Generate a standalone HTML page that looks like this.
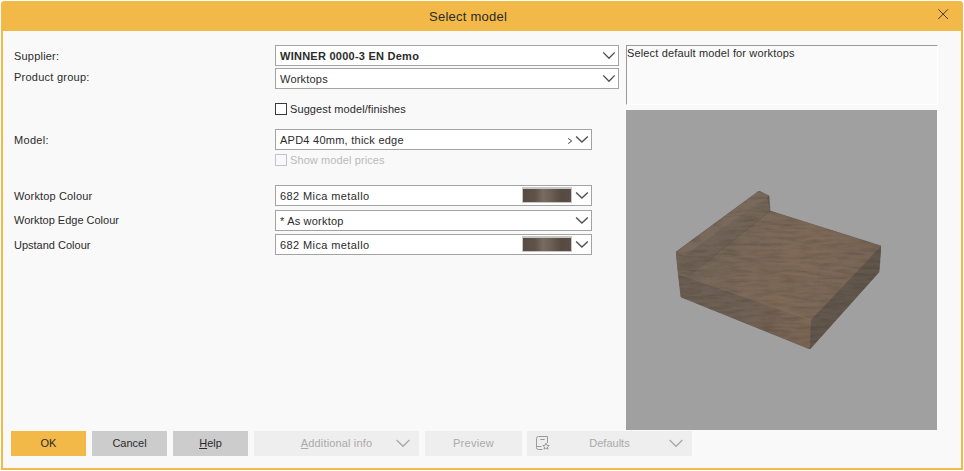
<!DOCTYPE html>
<html><head><meta charset="utf-8">
<style>
*{box-sizing:border-box;margin:0;padding:0}
html,body{width:964px;height:471px;background:#ffffff;overflow:hidden;font-family:"Liberation Sans",sans-serif;font-size:11px;color:#2b2b2b}
.a{position:absolute;white-space:nowrap}
#frame{position:absolute;left:1px;top:1px;width:962px;height:469px;border:2px solid #f2b948;border-top:none;background:#f9f9f9;border-radius:4px 4px 0 0}
#title{position:absolute;left:1px;top:1px;width:962px;height:30px;background:#f2b948;border-radius:4px 4px 0 0}
.box{position:absolute;background:#fff;border:1px solid #a3a3a3;height:21px}
.lbl{position:absolute;white-space:nowrap;line-height:13px}
.cb{position:absolute;width:12px;height:12px;border:1px solid #3a3a3a;background:#fff}
.btn{position:absolute;top:431px;height:25px;line-height:25px;text-align:center}
.sw{position:absolute;left:522px;width:50px;height:16px;border:1px solid #c6c6c6;border-top-width:2px;background:linear-gradient(90deg,#574b43 0%,#5e5249 25%,#7a6b5f 42%,#6a5d52 60%,#564a42 80%,#5a4e46 100%)}
svg{position:absolute;left:0;top:0}
</style></head><body>
<div id="frame"></div>
<div id="title"></div>
<div class="a" style="left:429px;top:9px;font-size:13px;line-height:15px;color:#2b2b2b;letter-spacing:0.25px">Select model</div>

<!-- labels -->
<div class="lbl" style="left:14px;top:50px;letter-spacing:0.2px">Supplier:</div>
<div class="lbl" style="left:14px;top:71px;letter-spacing:0.25px">Product group:</div>
<div class="lbl" style="left:14px;top:134px;letter-spacing:0.3px">Model:</div>
<div class="lbl" style="left:14px;top:190px;letter-spacing:0.15px">Worktop Colour</div>
<div class="lbl" style="left:14px;top:214px">Worktop Edge Colour</div>
<div class="lbl" style="left:14px;top:239px">Upstand Colour</div>

<!-- boxes -->
<div class="box" style="left:275px;top:45px;width:344px"></div>
<div class="lbl" style="left:280px;top:50px;font-weight:bold;letter-spacing:0.25px">WINNER 0000-3 EN Demo</div>
<div class="box" style="left:275px;top:68px;width:344px"></div>
<div class="lbl" style="left:280px;top:73px;letter-spacing:0.2px">Worktops</div>

<div class="cb" style="left:275px;top:103px"></div>
<div class="lbl" style="left:290px;top:103px;letter-spacing:0.1px">Suggest model/finishes</div>

<div class="box" style="left:275px;top:129px;width:317px"></div>
<div class="lbl" style="left:280px;top:134px;letter-spacing:0.25px">APD4 40mm, thick edge</div>
<div class="cb" style="left:275px;top:154px;border-color:#c6bfcc;background:#f9f9f9"></div>
<div class="lbl" style="left:290px;top:154px;color:#b9b9b9;letter-spacing:0.1px">Show model prices</div>

<div class="box" style="left:275px;top:185px;width:317px"></div>
<div class="lbl" style="left:280px;top:190px;letter-spacing:0.4px">682 Mica metallo</div>
<div class="sw" style="top:187px"></div>
<div class="box" style="left:275px;top:210px;width:317px"></div>
<div class="lbl" style="left:280px;top:215px;letter-spacing:0.2px">* As worktop</div>
<div class="box" style="left:275px;top:234px;width:317px"></div>
<div class="lbl" style="left:280px;top:239px;letter-spacing:0.4px">682 Mica metallo</div>
<div class="sw" style="top:236px"></div>

<!-- description -->
<div class="a" style="left:626px;top:45px;width:312px;height:60px;border:1px solid #ffffff;border-left-color:#9a9a9a;border-top-color:#9a9a9a;background:#fafafa"></div>
<div class="lbl" style="left:627px;top:47px;letter-spacing:0.15px">Select default model for worktops</div>

<!-- preview -->
<div class="a" style="left:626px;top:110px;width:311px;height:320px;background:#a0a0a0"></div>

<svg width="964" height="471" viewBox="0 0 964 471">
<defs>
<filter id="tx" x="0" y="0" width="100%" height="100%"><feTurbulence type="fractalNoise" baseFrequency="0.05 0.3" numOctaves="4" seed="11" result="n"/><feColorMatrix in="n" type="matrix" values="0 0 0 0 0  0 0 0 0 0  0 0 0 0 0  -0.5 0 0 0 0.33" result="m"/><feComposite in="m" in2="SourceGraphic" operator="in" result="c"/><feBlend in="SourceGraphic" in2="c" mode="multiply"/></filter>
<linearGradient id="gtop" x1="700" y1="220" x2="860" y2="300" gradientUnits="userSpaceOnUse"><stop offset="0" stop-color="#736659"/><stop offset="0.6" stop-color="#806a58"/><stop offset="1" stop-color="#776657"/></linearGradient>
<linearGradient id="gfront" x1="678" y1="280" x2="811" y2="330" gradientUnits="userSpaceOnUse"><stop offset="0" stop-color="#6a5e53"/><stop offset="0.5" stop-color="#706155"/><stop offset="1" stop-color="#7c6754"/></linearGradient>
<linearGradient id="gup" x1="690" y1="260" x2="770" y2="200" gradientUnits="userSpaceOnUse"><stop offset="0" stop-color="#6f6256"/><stop offset="1" stop-color="#766759"/></linearGradient>
</defs>
<g filter="url(#tx)" stroke-width="0.6" stroke-linejoin="round">
<polygon points="676,252 759,191 769,196 770,211 881,246 879,272 810,349 681,297" fill="#665a50" stroke="#665a50"/>
<polygon points="690,275 770,211 881,246 811,320 678,273" fill="url(#gtop)"/>
<polygon points="678,273 811,320 810,349 681,297" fill="url(#gfront)"/>
<polygon points="811,320 881,246 879,272 810,349" fill="#62574d"/>
<polygon points="684,256 767,197 770,211 690,275" fill="url(#gup)"/>
<polygon points="676,252 759,191 769,196 684,256" fill="#7a6a5c"/>
<polygon points="676,252 684,256 690,275 678,273" fill="#716356"/>
</g>
<g fill="none" stroke-width="0.8">
<path d="M678 273.5L811 320" stroke="#8a7563" opacity="0.7"/>
<path d="M690 275L770 211" stroke="#5f5247" opacity="0.5"/>
<path d="M811 320L881 246" stroke="#7a6756" opacity="0.5"/>
</g>
</svg>

<!-- buttons -->
<div class="btn" style="left:11px;width:75px;background:#f2b948">OK</div>
<div class="btn" style="left:92px;width:75px;background:#cccccc">Cancel</div>
<div class="btn" style="left:173px;width:75px;background:#cccccc"><u>H</u>elp</div>
<div class="btn" style="left:254px;width:165px;background:#eeeeee;color:#aaaaaa"><span style="letter-spacing:0.15px"><u>A</u>dditional info</span></div>
<div class="btn" style="left:425px;width:97px;background:#eeeeee;color:#aaaaaa;letter-spacing:0.3px">Preview</div>
<div class="btn" style="left:527px;width:165px;background:#eeeeee;color:#aaaaaa">Defaults</div>

<svg width="964" height="471" viewBox="0 0 964 471">
<g fill="none" stroke-linecap="butt">
<path d="M938.3 9.3L948 19M948 9.3L938.3 19" stroke="#2e2a22" stroke-width="0.9"/>
<g stroke="#4f4f4f" stroke-width="1.35">
<path d="M603.2 52.4L609 58.3L614.7 52.4"/>
<path d="M603.2 75.4L609 81.3L614.7 75.4"/>
<path d="M576.1 136.4L581.9 142.1L587.8 136.4"/>
<path d="M576.1 192.4L581.9 198.1L587.8 192.4"/>
<path d="M576.1 217.4L581.9 223.1L587.8 217.4"/>
<path d="M576.1 241.4L581.9 247.1L587.8 241.4"/>
</g>
<path d="M568.2 138.4L571.7 141L568.2 143.6" stroke="#3a3a3a" stroke-width="0.95"/>
<g stroke="#a8a8a8" stroke-width="1.3">
<path d="M396.6 440L403 446.3L409.4 440"/>
<path d="M669.6 440L676 446.3L682.4 440"/>
</g>
<g stroke="#9a9a9a" stroke-width="1">
<path d="M547.5 443V436.5H538.5Q536.5 436.5 536.5 438.5V447.5Q536.5 449.5 538.5 449.5H542.5"/>
<path d="M537 446.5H541.5M540.3 439.5H544.7"/>
<path d="M546 443.2L547 445.3L549.2 445.5L547.5 447L548 449.2L546 448L544 449.2L544.5 447L542.8 445.5L545 445.3Z"/>
</g>
</g>
</svg>
</body></html>
